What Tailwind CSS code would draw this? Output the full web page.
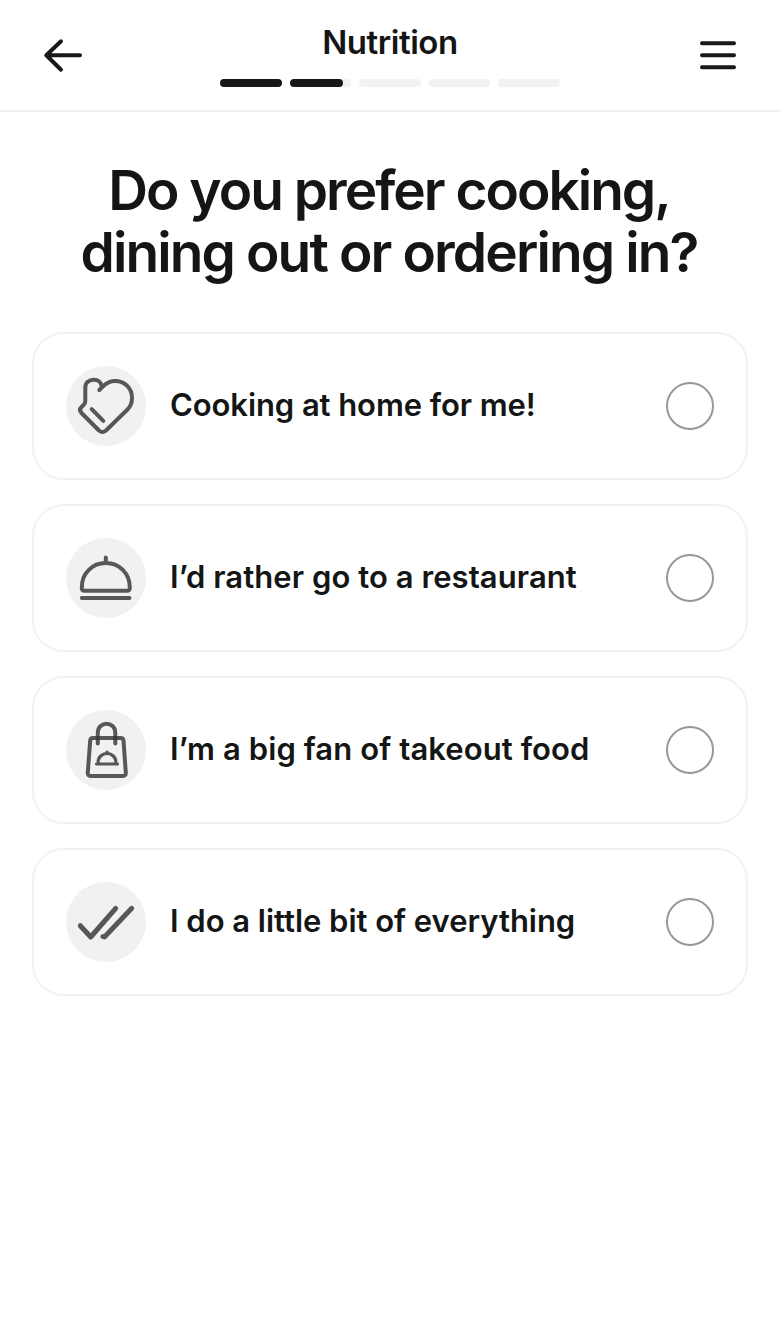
<!DOCTYPE html>
<html lang="en">
<head>
<meta charset="utf-8">
<title>Nutrition</title>
<script src="https://cdn.jsdelivr.net/npm/@tailwindcss/browser@4"></script>
</head>
<body class="min-h-screen bg-white font-['Inter',sans-serif] text-[#141616] overflow-hidden">
<header class="flex h-28 items-start justify-between border-b-2 border-[#efefef] px-10">
  <button class="mt-8 flex size-12 items-center" aria-label="Back">
    <svg class="size-12" viewBox="0 0 48 48" fill="none" stroke="#181a1a" stroke-width="4" stroke-linecap="round" stroke-linejoin="round"><path d="M40 23.3H6.5M21 9.3L6.3 23.3L21 37.7"/></svg>
  </button>
  <div class="flex w-[340px] flex-col pt-[22px]">
    <div class="text-center text-[33px] leading-10 font-semibold whitespace-nowrap"><span class="tracking-[-0.45px]">Nutrition</span></div>
    <div class="mt-[17px] flex gap-2">
      <div class="h-2 flex-1 rounded-full bg-[#161818]"></div>
      <div class="h-2 flex-1 rounded-full bg-[#f2f2f2]"><div class="h-2 w-[87%] rounded-full bg-[#161818]"></div></div>
      <div class="h-2 flex-1 rounded-full bg-[#f2f2f2]"></div>
      <div class="h-2 flex-1 rounded-full bg-[#f2f2f2]"></div>
      <div class="h-2 flex-1 rounded-full bg-[#f2f2f2]"></div>
    </div>
  </div>
  <button class="mt-8 flex size-12 items-center" aria-label="Menu">
    <svg class="size-12" viewBox="0 0 48 48" fill="none" stroke="#181a1a" stroke-width="4" stroke-linecap="round"><path d="M10 11.3H42M10 23.3H42M10 35.3H42"/></svg>
  </button>
</header>
<main class="px-8">
  <h1 class="mt-[47px] pr-0.5 text-center text-[55px] leading-[62px] font-semibold whitespace-nowrap"><span class="tracking-[-2px]">Do you prefer cooking,</span><br><span class="tracking-[-1.88px]">dining out or ordering in?</span></h1>
  <div class="mt-[49px] flex flex-col gap-6">
    <div class="flex h-[148px] items-center rounded-[32px] border-2 border-[#f2f2f2] px-8">
      <svg class="size-20 shrink-0 rounded-full bg-[#f1f1f1]" viewBox="0 0 80 80" fill="none" stroke="#575757" stroke-width="4" stroke-linecap="round" stroke-linejoin="round"><path d="M33.300 24L37 20.300C41 16.500 45 15 49 15C59 15 66 22.500 66 32C66 37 64.500 40.500 61.500 43.500L40 64.500Q36.500 67.500 33 64.500L15.500 47Q12.500 44 15.500 41L18 38.500Q19.300 37 19.300 35V21.500C19.300 16.500 23 13.700 27.500 13.700C32 13.700 35.500 16.500 35.500 20.500"/><path d="M25.700 43.200L37.300 54.800"/></svg>
      <span class="ml-6 flex-1 pb-0.5 text-[31px] leading-10 font-semibold whitespace-nowrap tracking-[-0.08px]">Cooking at home for me!</span>
      <span class="size-12 rounded-full border-2 border-[#989898]"></span>
    </div>
    <div class="flex h-[148px] items-center rounded-[32px] border-2 border-[#f2f2f2] px-8">
      <svg class="size-20 shrink-0 rounded-full bg-[#f1f1f1]" viewBox="0 0 80 80" fill="none" stroke="#575757" stroke-width="4" stroke-linecap="round" stroke-linejoin="round"><path d="M18.500 52.800Q15.800 52.800 15.800 49.500C15.800 35 26.500 25 39.800 25S63.800 35 63.800 49.500Q63.800 52.800 61 52.800Z"/><path d="M39.800 19.500V25M15.800 60H63.500"/></svg>
      <span class="ml-6 flex-1 pb-0.5 text-[31px] leading-10 font-semibold whitespace-nowrap tracking-[0.07px]">I’d rather go to a restaurant</span>
      <span class="size-12 rounded-full border-2 border-[#989898]"></span>
    </div>
    <div class="flex h-[148px] items-center rounded-[32px] border-2 border-[#f2f2f2] px-8">
      <svg class="size-20 shrink-0 rounded-full bg-[#f1f1f1]" viewBox="0 0 80 80" fill="none" stroke="#575757" stroke-width="4" stroke-linecap="round" stroke-linejoin="round"><path d="M27 28H54.500Q57.300 28 57.500 30.500L59.800 62.500Q60 66 57 66H24.500Q21.500 66 21.800 62.500L24.200 30.500Q24.400 28 27 28Z"/><path d="M31.800 33.500V23C31.800 10.700 49.300 10.700 49.300 23V33.500"/><path stroke-width="3.200" d="M30.500 54H51.500M32 53C32 47 36 43.500 41 43.500S50 47 50 53M41 42V43"/><path stroke="#3a3a3a" stroke-linecap="butt" d="M29.800 28H33.800M47.300 28H51.300"/></svg>
      <span class="ml-6 flex-1 pb-0.5 text-[31px] leading-10 font-semibold whitespace-nowrap tracking-[0.09px]">I’m a big fan of takeout food</span>
      <span class="size-12 rounded-full border-2 border-[#989898]"></span>
    </div>
    <div class="flex h-[148px] items-center rounded-[32px] border-2 border-[#f2f2f2] px-8">
      <svg class="size-20 shrink-0 rounded-full bg-[#f1f1f1]" viewBox="0 0 80 80" fill="none" stroke="#575757" stroke-width="5" stroke-linecap="round" stroke-linejoin="round"><path d="M14.300 43.700L24.700 55L49.700 26.300M37 54.500L38.500 55L65.700 26.300"/></svg>
      <span class="ml-6 flex-1 pb-0.5 text-[31px] leading-10 font-semibold whitespace-nowrap tracking-[-0.03px]">I do a little bit of everything</span>
      <span class="size-12 rounded-full border-2 border-[#989898]"></span>
    </div>
  </div>
</main>
</body>
</html>
